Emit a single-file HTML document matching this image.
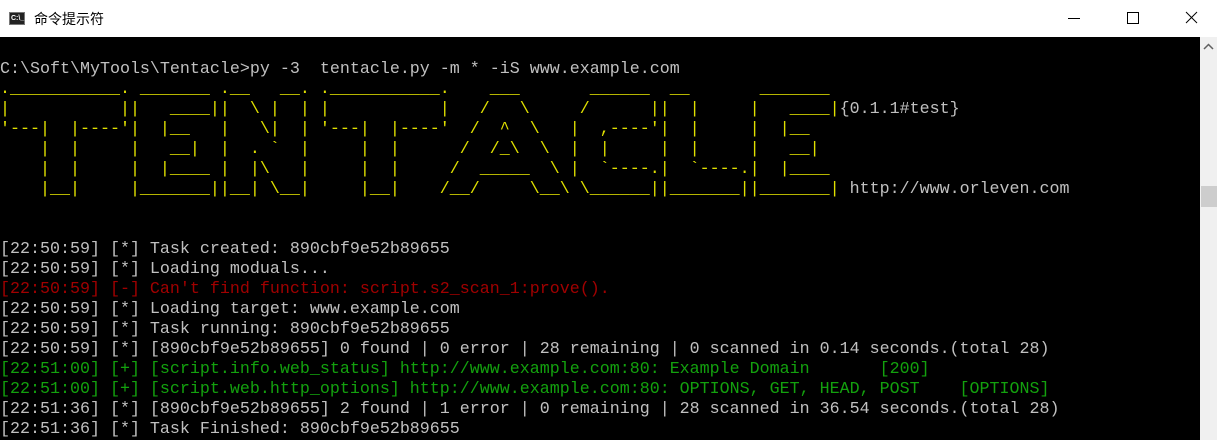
<!DOCTYPE html>
<html><head><meta charset="utf-8"><style>
*{margin:0;padding:0}
body{width:1217px;height:440px;background:#000;overflow:hidden;position:relative;font-family:"Liberation Mono",monospace}
#title{position:absolute;left:0;top:0;width:1217px;height:37px;background:#fff}
#title .t{position:absolute;left:34px;top:9px;font:14px "Liberation Sans","Noto Sans CJK SC",sans-serif;color:#000}
#icon{position:absolute;left:9px;top:12px;width:16px;height:13px;background:#222;border:1px solid #777;box-sizing:border-box;color:#fff;font:bold 7px "Liberation Sans",sans-serif;line-height:11px;padding-left:1px}
#sb{position:absolute;left:1200px;top:37px;width:17px;height:403px;background:#f0f0f0}
#thumb{position:absolute;left:1201px;top:186px;width:16px;height:21px;background:#cdcdcd}
pre{position:absolute;left:0;top:60px;font-family:"Liberation Mono",monospace;font-size:16.67px;line-height:20px;color:#c0c0c0;white-space:pre}
.y{color:#e0e000}.g{color:#13a10e}.r{color:#a00000}.w{color:#c0c0c0}
</style></head><body>
<div id="title"><div id="icon">C:\_</div><div class="t">命令提示符</div>
<svg style="position:absolute;left:1060px;top:8px" width="157" height="22">
<line x1="8" y1="10.5" x2="20" y2="10.5" stroke="#000" stroke-width="1"/>
<rect x="67.5" y="4.5" width="11" height="11" fill="none" stroke="#000"/>
<line x1="126" y1="4" x2="137" y2="15" stroke="#000"/><line x1="137" y1="4" x2="126" y2="15" stroke="#000"/>
</svg></div>
<div id="sb"><svg width="17" height="20"><path d="M4 12 L8.5 7.5 L13 12" fill="none" stroke="#606060" stroke-width="1.5"/></svg></div>
<div id="thumb"></div>
<pre>C:\Soft\MyTools\Tentacle&gt;py -3  tentacle.py -m * -iS www.example.com
<span class="y">.___________. _______ .__   __. .___________.    ___       ______  __       _______</span>
<span class="y">|           ||   ____||  \ |  | |           |   /   \     /      ||  |     |   ____|</span><span class="w">{0.1.1#test}</span>
<span class="y">'---|  |----'|  |__   |   \|  | '---|  |----'  /  ^  \   |  ,----'|  |     |  |__</span>
<span class="y">    |  |     |   __|  |  . `  |     |  |      /  /_\  \  |  |     |  |     |   __|</span>
<span class="y">    |  |     |  |____ |  |\   |     |  |     /  _____  \ |  `----.|  `----.|  |____</span>
<span class="y">    |__|     |_______||__| \__|     |__|    /__/     \__\ \______||_______||_______|</span> <span class="w">http://www.orleven.com</span>


[22:50:59] [*] Task created: 890cbf9e52b89655
[22:50:59] [*] Loading moduals...
<span class="r">[22:50:59] [-] Can't find function: script.s2_scan_1:prove().</span>
[22:50:59] [*] Loading target: www.example.com
[22:50:59] [*] Task running: 890cbf9e52b89655
[22:50:59] [*] [890cbf9e52b89655] 0 found | 0 error | 28 remaining | 0 scanned in 0.14 seconds.(total 28)
<span class="g">[22:51:00] [+] [script.info.web_status] http://www.example.com:80: Example Domain       [200]</span>
<span class="g">[22:51:00] [+] [script.web.http_options] http://www.example.com:80: OPTIONS, GET, HEAD, POST    [OPTIONS]</span>
[22:51:36] [*] [890cbf9e52b89655] 2 found | 1 error | 0 remaining | 28 scanned in 36.54 seconds.(total 28)
[22:51:36] [*] Task Finished: 890cbf9e52b89655</pre>
</body></html>
